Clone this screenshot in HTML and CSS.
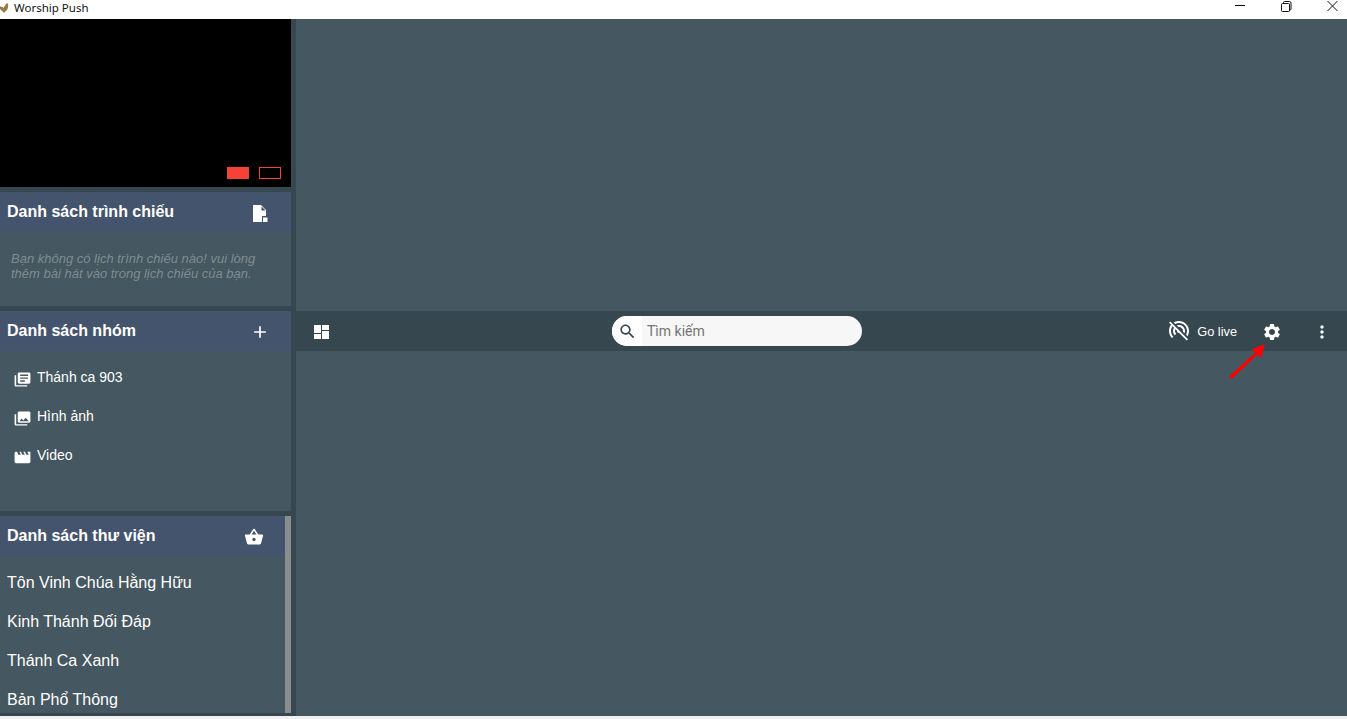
FILE: index.html
```html
<!DOCTYPE html>
<html lang="en">
<head>
  <meta charset="UTF-8" />
  <title>Worship Push</title>
  <link rel="stylesheet" href="styles.css">
</head>
<body>
  <header class="titlebar">
    <div class="app-name">
      <svg class="app-logo" viewBox="0 0 10 10"><path d="M0 3l2 1 1 0 1 1 1-2 2-3 2 0 0 4-1 3-3 3-1 0-2-2-2-2z"/></svg>
      Worship Push
    </div>
    <div class="win-buttons">
      <svg class="win-btn" viewBox="0 0 46 19"><path d="M26 5.500h10"/></svg>
      <svg class="win-btn" viewBox="0 0 46 19"><path d="M27.500 3.500h6a1 1 0 0 1 1 1v6a1 1 0 0 1-1 1h-6a1 1 0 0 1-1-1v-6a1 1 0 0 1 1-1zM28.500 3.500v-1a1 1 0 0 1 1-1h5a1.500 1.500 0 0 1 1.500 1.500v6a1 1 0 0 1-1 1h-1"/></svg>
      <svg class="win-btn" viewBox="0 0 46 19"><path d="M26.500 1l10 10M36.500 1l-10 10"/></svg>
    </div>
  </header>

  <div class="app">
    <aside class="sidebar">
      <div class="preview">
        <span class="screen-btn on"></span>
        <span class="screen-btn"></span>
      </div>

      <section class="panel panel-show">
        <div class="panel-head">
          <h2>Danh sách trình chiếu</h2>
          <svg class="icon head-icon" viewBox="0 0 20 20"><path d="M3 2h8l5 5v6h-4v6H3zM11.500 3.500V7.500h4zM13 14.500h4.500V19H13z" fill-rule="evenodd"/></svg>
        </div>
        <p class="empty-note">Bạn không có lịch trình chiếu nào! vui lòng thêm bài hát vào trong lịch chiếu của bạn.</p>
      </section>

      <section class="panel panel-groups">
        <div class="panel-head">
          <h2>Danh sách nhóm</h2>
          <svg class="icon head-icon" viewBox="0 0 24 24"><path d="M19 13h-6v6h-2v-6H5v-2h6V5h2v6h6v2z"/></svg>
        </div>
        <ul class="group-list">
          <li>
            <svg class="icon" viewBox="0 0 24 24" preserveAspectRatio="none"><path d="M4 6H2v14c0 1.100.9 2 2 2h14v-2H4V6zm16-4H8c-1.100 0-2 .9-2 2v12c0 1.100.9 2 2 2h12c1.100 0 2-.9 2-2V4c0-1.100-.9-2-2-2zm-1 9H9V9h10v2zm-4 4H9v-2h6v2zm4-8H9V5h10v2z"/></svg>
            <span>Thánh ca 903</span>
          </li>
          <li>
            <svg class="icon" viewBox="0 0 24 24" preserveAspectRatio="none"><path d="M22 16V4c0-1.100-.9-2-2-2H8c-1.100 0-2 .9-2 2v12c0 1.100.9 2 2 2h12c1.100 0 2-.9 2-2zm-11-4l2.030 2.710L16 11l4 5H8l3-4zM2 6v14c0 1.100.9 2 2 2h14v-2H4V6H2z"/></svg>
            <span>Hình ảnh</span>
          </li>
          <li>
            <svg class="icon" viewBox="0 0 24 24" preserveAspectRatio="none"><path d="M18 4l2 4h-3l-2-4h-2l2 4h-3l-2-4H8l2 4H7L5 4H4c-1.100 0-1.990.9-1.990 2L2 18c0 1.100.9 2 2 2h16c1.100 0 2-.9 2-2V4h-4z"/></svg>
            <span>Video</span>
          </li>
        </ul>
      </section>

      <section class="library">
        <div class="library-scroll">
          <div class="panel-head">
            <h2>Danh sách thư viện</h2>
            <svg class="icon head-icon" viewBox="0 0 24 24"><path d="M17.210 9l-4.380-6.560c-.19-.28-.51-.42-.83-.42-.32 0-.64.14-.83.43L6.790 9H2c-.55 0-1 .45-1 1 0 .09.010.18.040.27l2.540 9.270c.23.84 1 1.460 1.920 1.460h13c.92 0 1.690-.62 1.930-1.460l2.540-9.270L23 10c0-.55-.45-1-1-1h-4.790zM9 9l3-4.400L15 9H9zm3 8c-1.100 0-2-.9-2-2s.9-2 2-2 2 .9 2 2-.9 2-2 2z"/></svg>
          </div>
          <ul class="library-list">
            <li>Tôn Vinh Chúa Hằng Hữu</li>
            <li>Kinh Thánh Đối Đáp</li>
            <li>Thánh Ca Xanh</li>
            <li>Bản Phổ Thông</li>
          </ul>
        </div>
        <div class="scroll-thumb"></div>
      </section>
    </aside>

    <main class="main">
      <div class="stage"></div>
      <div class="toolbar">
        <svg class="icon layout-icon" viewBox="0 0 15 14"><path d="M0 0h7v8H0zM0 9h7v5H0zM8 0h7v5H8zM8 6h7v8H8z"/></svg>
        <div class="search">
          <span class="search-icon">
            <svg class="icon" viewBox="0 0 24 24"><path d="M15.500 14h-.79l-.28-.27C15.410 12.590 16 11.110 16 9.500 16 5.910 13.090 3 9.500 3S3 5.910 3 9.500 5.910 16 9.500 16c1.610 0 3.090-.59 4.230-1.570l.27.28v.79l5 4.990L20.490 19l-4.990-5zm-6 0C7.010 14 5 11.990 5 9.500S7.010 5 9.500 5 14 7.010 14 9.500 11.990 14 9.500 14z"/></svg>
          </span>
          <input type="text" placeholder="Tìm kiếm" />
        </div>
        <div class="tools">
          <div class="go-live">
            <svg class="icon" viewBox="0 0 24 24"><path d="M17.560 14.240c.28-.69.44-1.450.44-2.240 0-3.310-2.690-6-6-6-.79 0-1.550.16-2.240.44l1.620 1.620c.2-.03.41-.06.62-.06 2.210 0 4 1.790 4 4 0 .21-.02.42-.05.63l1.610 1.610zM12 4c4.420 0 8 3.580 8 8 0 1.350-.35 2.620-.95 3.740l1.470 1.470C21.460 15.690 22 13.910 22 12c0-5.520-4.480-10-10-10-1.910 0-3.690.55-5.210 1.470l1.460 1.460C9.370 4.340 10.650 4 12 4zM3.270 2.500L2 3.770l2.100 2.100C2.790 7.570 2 9.690 2 12c0 2.760 1.120 5.260 2.930 7.070l1.420-1.420C4.900 16.210 4 14.210 4 12c0-1.760.57-3.380 1.530-4.690l1.430 1.440C6.360 9.680 6 10.800 6 12c0 1.660.68 3.150 1.760 4.240l1.420-1.420C8.450 14.100 8 13.100 8 12c0-.65.17-1.250.44-1.790l1.580 1.580L10 12c0 1.100.9 2 2 2l.21-.02 7.520 7.520L21 20.230 3.270 2.500z"/></svg>
            <span>Go live</span>
          </div>
          <div class="tool-btn">
            <svg class="icon" viewBox="0 0 24 24"><path d="M19.140 12.940c.04-.3.060-.61.060-.94 0-.32-.02-.64-.07-.94l2.030-1.580c.18-.14.23-.41.12-.61l-1.920-3.320c-.12-.22-.37-.29-.59-.22l-2.390.96c-.5-.38-1.030-.7-1.620-.94l-.36-2.540c-.04-.24-.24-.41-.48-.41h-3.840c-.24 0-.43.17-.47.41l-.36 2.540c-.59.24-1.130.57-1.620.94l-2.390-.96c-.22-.08-.47 0-.59.22L2.740 8.870c-.12.21-.08.47.12.61l2.030 1.580c-.05.3-.09.63-.09.94s.020.64.070.94l-2.030 1.580c-.18.14-.23.41-.12.61l1.920 3.320c.12.22.37.29.59.22l2.390-.96c.5.38 1.030.7 1.620.94l.36 2.540c.05.24.24.41.48.41h3.840c.24 0 .44-.17.47-.41l.36-2.540c.59-.24 1.130-.56 1.620-.94l2.390.96c.22.08.47 0 .59-.22l1.920-3.320c.12-.22.070-.47-.12-.61l-2.010-1.580zM12 15.600c-1.980 0-3.600-1.620-3.600-3.600s1.620-3.600 3.600-3.600 3.600 1.620 3.600 3.600-1.620 3.600-3.600 3.600z"/></svg>
          </div>
          <div class="tool-btn">
            <svg class="icon" viewBox="0 0 24 24"><path d="M12 8c1.100 0 2-.9 2-2s-.9-2-2-2-2 .9-2 2 .9 2 2 2zm0 2c-1.100 0-2 .9-2 2s.9 2 2 2 2-.9 2-2-.9-2-2-2zm0 6c-1.100 0-2 .9-2 2s.9 2 2 2 2-.9 2-2-.9-2-2-2z"/></svg>
          </div>
        </div>
        <svg class="red-arrow" viewBox="0 0 40 40"><path d="M36 0L22.500 5.500l4 3L0 32.500 2.500 35 28.500 10.500l3.500 3.500z"/></svg>
      </div>
      <div class="stage"></div>
    </main>
  </div>
  <div class="bottom-strip"></div>
</body>
</html>
```

FILE: styles.css
```css
* {
  margin: 0;
  padding: 0;
  box-sizing: border-box;
}

html, body {
  height: 100%;
  overflow: hidden;
}

body {
  font-family: 'Liberation Sans', Arial, sans-serif;
  background: #f0f0f0;
  color: #fff;
  display: flex;
  flex-direction: column;
}

/* window chrome */
.titlebar {
  height: 19px;
  flex-shrink: 0;
  background: #fff;
  color: #111;
  display: flex;
  justify-content: space-between;
  align-items: flex-start;
}

.app-name {
  display: flex;
  align-items: center;
  gap: 5px;
  height: 15px;
  font-family: 'Noto Sans', sans-serif;
  font-size: 11.5px;
}

.app-logo {
  width: 9px;
  height: 10px;
  fill: #9a7a45;
}

.win-buttons {
  display: flex;
}

.win-btn {
  width: 46px;
  height: 19px;
  fill: none;
  stroke: #111;
  stroke-width: 1;
}

/* layout */
.app {
  flex-grow: 1;
  display: flex;
  min-height: 0;
}

.bottom-strip {
  height: 3px;
  flex-shrink: 0;
}

.sidebar {
  width: 296px;
  flex-shrink: 0;
  background: #37474f;
  border-right: 5px solid #37474f;
  display: flex;
  flex-direction: column;
}

.preview {
  height: 168px;
  background: #000;
  display: flex;
  justify-content: flex-end;
  align-items: flex-end;
  gap: 10px;
  padding: 0 10px 8px 0;
}

.screen-btn {
  width: 22px;
  height: 12px;
  border: 1px solid #f44336;
}

.screen-btn.on {
  background: #f44336;
}

.panel {
  background: #455760;
  margin-top: 5px;
}

.panel-show {
  height: 114px;
}

.panel-groups {
  height: 200px;
}

.panel-head {
  height: 40px;
  background: #44546c;
  display: flex;
  align-items: center;
  justify-content: space-between;
  padding: 0 21px 0 7px;
}

.panel-head h2 {
  font-size: 16px;
  font-weight: bold;
}

.icon {
  width: 20px;
  height: 20px;
  fill: #fff;
  flex-shrink: 0;
}

.head-icon {
  margin-top: 2px;
}

.empty-note {
  padding: 19px 30px 0 11px;
  font-size: 13px;
  font-style: italic;
  line-height: 15px;
  color: rgba(255, 255, 255, 0.33);
}

.group-list {
  list-style: none;
  padding-top: 7px;
}

.group-list li {
  height: 39px;
  display: flex;
  align-items: center;
  gap: 5px;
  padding-left: 13px;
  font-size: 14px;
}

.group-list .icon {
  width: 19px;
  height: 17px;
  margin-top: 3px;
}

.group-list span {
  margin-top: -2px;
}

/* library, with its scrollbar */
.library {
  height: 197px;
  margin-top: 5px;
  display: flex;
  overflow: hidden;
}

.library-scroll {
  flex-grow: 1;
  background: #455760;
}

.scroll-thumb {
  width: 6px;
  background: #8a8d8e;
}

.library-list {
  list-style: none;
  padding-top: 7px;
}

.library-list li {
  height: 39px;
  display: flex;
  align-items: center;
  padding-left: 7px;
  font-size: 16px;
}

/* main area */
.main {
  flex-grow: 1;
  display: flex;
  flex-direction: column;
  min-width: 0;
}

.stage {
  flex: 1;
  background: #455760;
}

.stage:first-child {
  flex: 0 0 292px;
}

.toolbar {
  height: 40px;
  flex-shrink: 0;
  background: #37474f;
  position: relative;
  display: flex;
  align-items: center;
  padding-left: 18px;
}

.layout-icon {
  width: 15px;
  height: 14px;
  margin-top: 2px;
}

.search {
  position: absolute;
  left: 316px;
  top: 5px;
  width: 250px;
  height: 30px;
  display: flex;
  border-radius: 15px;
  overflow: hidden;
  background: #f7f7f7;
}

.search-icon {
  width: 30px;
  background: #fff;
  display: flex;
  align-items: center;
  justify-content: center;
  padding-left: 1px;
}

.search-icon .icon {
  width: 19px;
  height: 19px;
  fill: #37474f;
}

.search input {
  flex-grow: 1;
  border: none;
  outline: none;
  background: transparent;
  padding-left: 5px;
  font-family: 'Roboto', sans-serif;
  font-size: 14px;
}

.search input::placeholder {
  color: #757575;
  opacity: 1;
}

.tools {
  margin-left: auto;
  display: flex;
  align-items: center;
}

.go-live {
  display: flex;
  align-items: center;
  gap: 6px;
  margin-right: 10px;
  font-size: 12.8px;
}

.go-live .icon {
  width: 24px;
  height: 24px;
}

.tool-btn {
  width: 50px;
  display: flex;
  justify-content: center;
  margin-top: 1px;
}

.red-arrow {
  position: absolute;
  left: 933px;
  top: 33px;
  width: 40px;
  height: 40px;
  fill: #f00;
}
```
